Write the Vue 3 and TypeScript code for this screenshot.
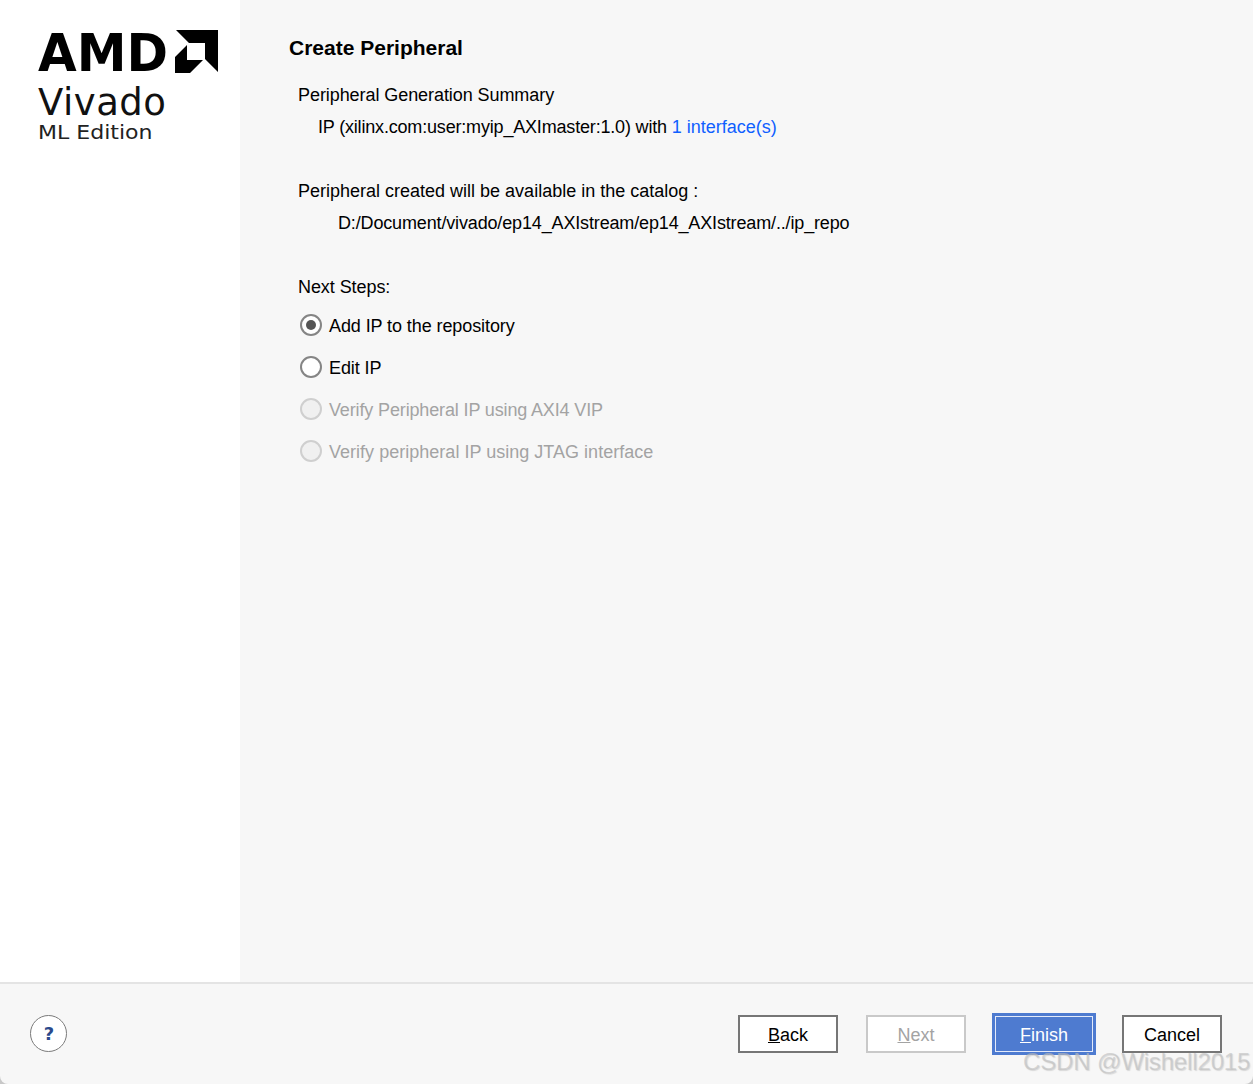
<template>
  <div class="dialog">
    <div class="body">
      <aside class="side">
        <div class="logo-top">
          <svg class="amd-word" width="137" height="62" viewBox="0 0 137 62">
            <text x="0" y="48.5" textLength="130" lengthAdjust="spacingAndGlyphs" class="amd-text">AMD</text>
          </svg>
          <svg class="amd-mark" width="44" height="44" viewBox="0 0 44 44">
            <path d="M1 0H43V42L30 29V13H14Z" fill="#000" />
            <path d="M12 15L0 27V43H15L28 30H12Z" fill="#000" />
          </svg>
        </div>
        <div class="vivado">Vivado</div>
        <div class="edition">ML Edition</div>
      </aside>
      <main class="content">
        <h1 class="title">Create Peripheral</h1>
        <div class="section">
          <p class="line first">Peripheral Generation Summary</p>
          <p class="line indent-1">IP (xilinx.com:user:myip_AXImaster:1.0) with <a class="link">1 interface(s)</a></p>
          <p class="line gap">Peripheral created will be available in the catalog :</p>
          <p class="line indent-2">D:/Document/vivado/ep14_AXIstream/ep14_AXIstream/../ip_repo</p>
          <p class="line steps">Next Steps:</p>
        </div>
        <div class="options">
          <div v-for="opt in options" :key="opt.label" class="option" :class="{ disabled: opt.disabled }">
            <span class="radio" :class="{ checked: opt.checked }"></span>
            <span class="label">{{ opt.label }}</span>
          </div>
        </div>
      </main>
    </div>
    <footer class="footer">
      <button class="help">?</button>
      <div class="buttons">
        <button class="btn"><u>B</u>ack</button>
        <button class="btn off"><u>N</u>ext</button>
        <button class="btn primary"><u>F</u>inish</button>
        <button class="btn">Cancel</button>
      </div>
      <span class="watermark">CSDN @Wishell2015</span>
    </footer>
  </div>
</template>

<script setup lang="ts">
interface Option {
  label: string
  checked?: boolean
  disabled?: boolean
}

const options: Option[] = [
  { label: 'Add IP to the repository', checked: true },
  { label: 'Edit IP' },
  { label: 'Verify Peripheral IP using AXI4 VIP', disabled: true },
  { label: 'Verify peripheral IP using JTAG interface', disabled: true },
]
</script>

<style>
html,
body {
  margin: 0;
  background: #c8c8c8;
}
</style>

<style scoped>
.dialog {
  width: 1253px;
  height: 1084px;
  display: flex;
  flex-direction: column;
  background: #f7f7f7;
  border-radius: 0 0 8px 8px;
  font-family: "Liberation Sans", Arial, sans-serif;
  font-size: 18px;
  color: #000;
  overflow: hidden;
}

.body {
  display: flex;
  height: 982px;
}

.side {
  width: 240px;
  background: #fff;
  padding: 30px 0 0 38px;
  box-sizing: border-box;
  flex-shrink: 0;
}

.logo-top {
  display: flex;
  align-items: flex-start;
  height: 44px;
}

.amd-word {
  display: block;
  margin-top: -8px;
}

.amd-text {
  font-family: "DejaVu Sans", sans-serif;
  font-weight: 700;
  font-size: 52px;
}

.vivado {
  font-family: "DejaVu Sans", sans-serif;
  font-size: 37px;
  line-height: 36px;
  margin-top: 11px;
  letter-spacing: 0.5px;
  color: #111;
}

.edition {
  font-family: "DejaVu Sans", sans-serif;
  font-size: 19px;
  line-height: 20px;
  margin-top: 1px;
  color: #222;
  width: 100px;
  white-space: nowrap;
  transform: scaleX(1.16);
  transform-origin: left center;
}

.content {
  flex: 1;
  padding: 36px 0 0 49px;
}

.title {
  margin: 0;
  font-size: 21px;
  line-height: 24px;
  font-weight: 700;
}

.section {
  padding-left: 9px;
  letter-spacing: -0.07px;
}

.line {
  margin: 0;
  line-height: 22px;
}

.first {
  margin-top: 24px;
}

.indent-1 {
  margin-top: 10px;
  padding-left: 20px;
  letter-spacing: -0.18px;
}

.gap {
  margin-top: 42px;
  letter-spacing: 0;
}

.indent-2 {
  margin-top: 10px;
  padding-left: 40px;
  letter-spacing: -0.15px;
}

.steps {
  margin-top: 42px;
}

.link {
  color: #0f5fff;
  letter-spacing: 0;
}

.options {
  padding: 6px 0 0 11px;
  letter-spacing: -0.09px;
}

.option {
  display: flex;
  align-items: center;
  gap: 7px;
  height: 42px;
}

.label {
  padding-top: 2px;
}

.option:nth-child(3) {
  letter-spacing: -0.14px;
}

.option:nth-child(4) {
  letter-spacing: 0.02px;
}

.option.disabled {
  color: #a3a3a3;
}

.radio {
  width: 22px;
  height: 22px;
  box-sizing: border-box;
  border: 2px solid #858585;
  border-radius: 50%;
  background: #fff;
  display: flex;
  align-items: center;
  justify-content: center;
}

.radio.checked::after {
  content: "";
  width: 10px;
  height: 10px;
  border-radius: 50%;
  background: #555;
}

.disabled .radio {
  border-color: #cfcfcf;
  background: #f0f0f0;
}

.footer {
  position: relative;
  flex: 1;
  display: flex;
  justify-content: space-between;
  border-top: 2px solid #e4e4e4;
  padding: 30px 31px 0 30px;
}

.help {
  width: 37px;
  height: 37px;
  margin-top: 1px;
  padding: 0 0 0 1px;
  border: 1px solid #7a7a7a;
  border-radius: 50%;
  background: #fff;
  color: #2a4a8c;
  font-family: "DejaVu Sans", sans-serif;
  font-size: 18px;
  font-weight: 700;
}

.buttons {
  display: flex;
  align-items: flex-start;
  gap: 28px;
  padding-top: 1px;
}

.btn {
  width: 100px;
  height: 38px;
  box-sizing: border-box;
  padding: 2px 0 0;
  border: 2px solid #767676;
  background: #fff;
  color: #000;
  font-family: "Liberation Sans", Arial, sans-serif;
  font-size: 18px;
}

.btn.off {
  border-color: #c9c9c9;
  color: #a3a3a3;
}

.btn.primary {
  background: #4e7bd0;
  color: #fff;
  border: 1px solid #4e7bd0;
  outline: 2px solid #4e7bd0;
  box-shadow: inset 0 0 0 1px #e3eafa;
}

.watermark {
  position: absolute;
  left: 1023px;
  top: 63px;
  font-size: 24px;
  line-height: 30px;
  letter-spacing: -0.15px;
  color: rgba(190, 190, 190, 0.6);
  text-shadow: 1px 1px 1px rgba(160, 160, 160, 0.35);
  white-space: nowrap;
}
</style>
